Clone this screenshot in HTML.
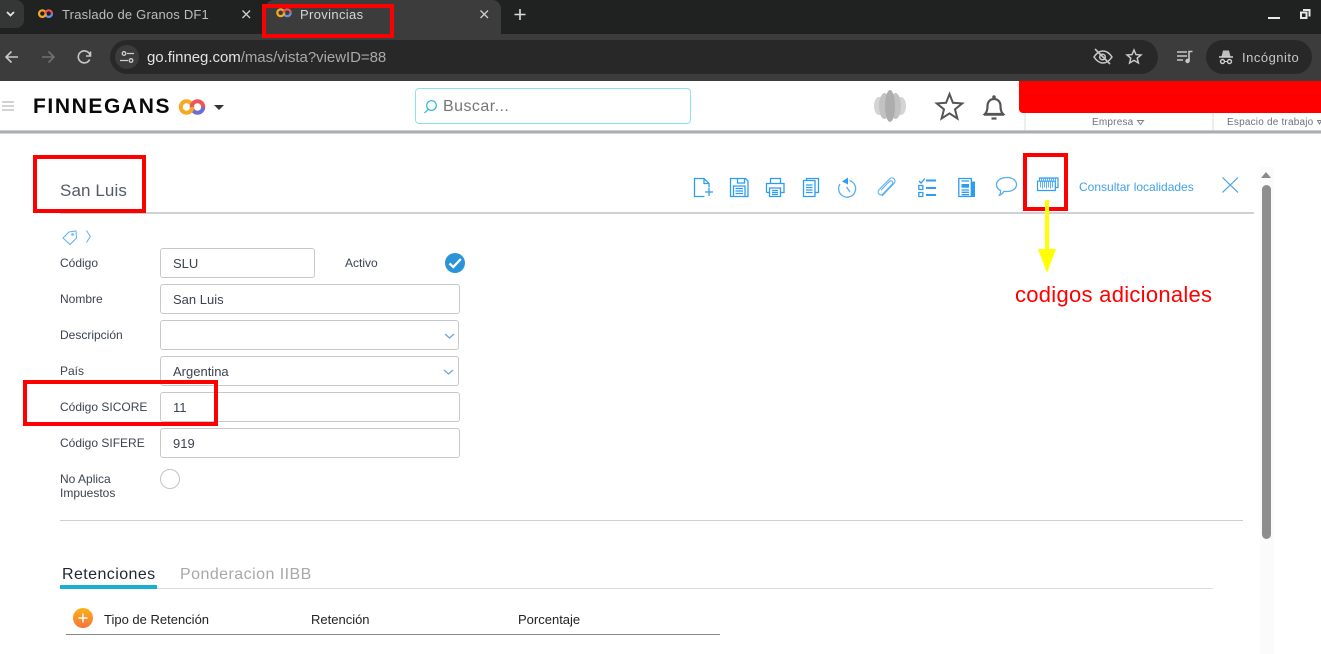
<!DOCTYPE html>
<html><head><meta charset="utf-8"><title>Provincias</title>
<style>
html,body{margin:0;padding:0;width:1321px;height:654px;overflow:hidden;background:#fff;font-family:"Liberation Sans",sans-serif}
.a{position:absolute;white-space:nowrap}
.l{position:absolute;left:60px;font-size:12px;color:#3b4351;line-height:14px}
.i{position:absolute;left:160px;box-sizing:border-box;height:30px;border:1px solid #c9c9c9;border-radius:3px;font-size:13px;color:#3b4351;padding-left:12px;line-height:30px;background:#fff}
.r{position:absolute;box-sizing:border-box;border:4px solid #f00}
svg{position:absolute;overflow:visible}
</style></head><body>
<!-- browser chrome -->
<div class="a" style="left:0;top:0;width:1321px;height:34px;background:#202221"></div>
<div class="a" style="left:0;top:34px;width:1321px;height:47px;background:#3c3c3c"></div>
<div class="a" style="left:0;top:0;width:24px;height:28px;background:#353636;border-radius:0 8px 8px 0"></div>
<svg style="left:0;top:0" width="24" height="28"><path d="M7 12l3.500 3.500L14 12" fill="none" stroke="#e3e3e3" stroke-width="1.800"/></svg>
<div class="a" style="left:265px;top:0;width:236px;height:34px;background:#3c3c3c;border-radius:9px 9px 0 0"></div>
<svg style="left:38px;top:9px" width="15" height="9.200" viewBox="0 0 26 16" fill="none" stroke-width="3.800"><path d="M12.750 8A5.750 5.750 0 0 0 24.250 8" stroke="#6d8fe0"/><circle cx="7.500" cy="8" r="5.750" stroke="#f7a823"/><path d="M12.750 8A5.750 5.750 0 0 1 24.250 8" stroke="#f0545a"/></svg>
<svg style="left:276px;top:8px" width="16" height="9.500" viewBox="0 0 26 16" fill="none" stroke-width="3.800"><path d="M12.750 8A5.750 5.750 0 0 0 24.250 8" stroke="#5d9ad8"/><circle cx="7.500" cy="8" r="5.750" stroke="#f7a823"/><path d="M12.750 8A5.750 5.750 0 0 1 24.250 8" stroke="#f0545a"/></svg>
<div class="a" style="left:62px;top:7px;font-size:13px;line-height:16px;color:#bdbdbd;letter-spacing:.2px">Traslado de Granos DF1</div>
<div class="a" style="left:300px;top:7px;font-size:13px;line-height:16px;color:#d6d6d6;letter-spacing:.35px">Provincias</div>
<svg style="left:0;top:0" width="540" height="30"><path d="M242.500 10.500l7.500 7.500M250 10.500l-7.500 7.500M480.500 10.500l7.500 7.500M488 10.500l-7.500 7.500" stroke="#d0d0d0" stroke-width="1.300"/><path d="M520 9v11M514.500 14.500h11" stroke="#dcdcdc" stroke-width="1.600"/></svg>
<svg style="left:1260px;top:0" width="60" height="30"><path d="M8 18h12" stroke="#e8e8e8" stroke-width="2"/><path d="M43 10h6.500v6.500" fill="none" stroke="#e8e8e8" stroke-width="2"/><path d="M41 12.500h5.500v5.500H41z" fill="none" stroke="#e8e8e8" stroke-width="2"/></svg>
<svg style="left:0;top:40px" width="110" height="34"><path d="M18 17H7M11.500 11.500L6 17l5.500 5.500" fill="none" stroke="#c8c8c8" stroke-width="1.600"/><path d="M42 17h11M48.500 11.500L54 17l-5.500 5.500" fill="none" stroke="#717171" stroke-width="1.600"/><path d="M90 15a6 6 0 1 0-.300 4.500M90.500 11.500v4.500h-4.500" fill="none" stroke="#c8c8c8" stroke-width="1.600"/></svg>
<div class="a" style="left:110px;top:40px;width:1048px;height:34px;background:#282828;border-radius:17px"></div>
<div class="a" style="left:115px;top:45px;width:24px;height:24px;background:#3c3c3c;border-radius:12px"></div>
<svg style="left:115px;top:45px" width="24" height="24"><circle cx="9" cy="8.500" r="1.800" fill="none" stroke="#d0d0d0" stroke-width="1.300"/><circle cx="16" cy="15.500" r="1.800" fill="none" stroke="#d0d0d0" stroke-width="1.300"/><path d="M12 8.500h7M5 15.500h8" stroke="#d0d0d0" stroke-width="1.300"/></svg>
<div class="a" style="left:147px;top:49px;font-size:15px;line-height:18px;color:#a9a9a9;letter-spacing:-.04px"><span style="color:#e3e3e3">go.finneg.com</span>/mas/vista?viewID=88</div>
<svg style="left:1090px;top:46px" width="54" height="22"><path d="M4 11c3-4.500 6-6 9-6s6 1.500 9 6c-3 4.500-6 6-9 6s-6-1.500-9-6z" fill="none" stroke="#c8c8c8" stroke-width="1.500"/><circle cx="12.500" cy="11" r="2.800" fill="none" stroke="#c8c8c8" stroke-width="1.500"/><path d="M5 3l15 15" stroke="#c8c8c8" stroke-width="1.600"/><path d="M44 4l2 4.600 5 .4-3.800 3.200 1.200 4.800-4.400-2.600-4.400 2.600 1.200-4.800L37 9l5-.4z" fill="none" stroke="#c8c8c8" stroke-width="1.500"/></svg>
<svg style="left:1175px;top:46px" width="20" height="20"><path d="M2 6h10M2 10h10M2 14h6" stroke="#c8c8c8" stroke-width="1.600"/><path d="M14 15V5.500h3.500" fill="none" stroke="#c8c8c8" stroke-width="1.600"/><circle cx="12.500" cy="15" r="2.200" fill="#c8c8c8"/></svg>
<div class="a" style="left:1206px;top:40px;width:106px;height:34px;background:#282828;border-radius:17px"></div>
<svg style="left:1218px;top:49px" width="16" height="16"><path d="M1 8h14" fill="none" stroke="#d0d0d0" stroke-width="1.500"/><path d="M3.500 7.500l1.500-6h6l1.500 6" fill="#d0d0d0" opacity=".9"/><circle cx="4.500" cy="12.500" r="2" fill="none" stroke="#d0d0d0" stroke-width="1.400"/><circle cx="11.500" cy="12.500" r="2" fill="none" stroke="#d0d0d0" stroke-width="1.400"/><path d="M6.500 12.500h3" stroke="#d0d0d0"/></svg>
<div class="a" style="left:1242px;top:50px;font-size:13px;line-height:15px;color:#c8c8c8;letter-spacing:.5px">Incógnito</div>

<!-- app header -->
<svg style="left:0;top:0" width="1321" height="135"><path d="M2 102h12M2 106h12M2 110h12" stroke="#a4a4a4" stroke-width="1"/><path d="M0 130.500h1321" stroke="#eceef0"/><path d="M0 132h1321" stroke="#a9adb5" stroke-width="3"/><path d="M1025 113v17M1213 113v17" stroke="#eceef0" stroke-width="2"/></svg>
<div class="a" style="left:33px;top:94px;font-size:21px;line-height:26px;color:#0a0a0a;font-weight:bold;letter-spacing:1.600px">FINNEGANS</div>
<svg style="left:179px;top:99px" width="26" height="16" viewBox="0 0 26 16" fill="none" stroke-width="4"><path d="M12.750 8A5.750 5.750 0 0 0 24.250 8" stroke="#6d6fd0"/><circle cx="7.500" cy="8" r="5.750" stroke="#f7a823"/><path d="M12.750 8A5.750 5.750 0 0 1 24.250 8" stroke="#f0545a"/></svg>
<svg style="left:214px;top:105px" width="10" height="5"><path d="M0 0h10L5 5z" fill="#333"/></svg>
<div class="a" style="left:415px;top:88px;width:276px;height:36px;box-sizing:border-box;border:1px solid #8ee1f4;border-radius:4px"></div>
<svg style="left:423px;top:99px" width="16" height="16"><circle cx="8.500" cy="6.500" r="4.800" fill="none" stroke="#29b5d8" stroke-width="1.200"/><path d="M5 10.500L1.500 14" stroke="#29b5d8" stroke-width="1.200"/></svg>
<div class="a" style="left:443px;top:97px;font-size:16px;line-height:19px;color:#767676;letter-spacing:.45px">Buscar...</div>
<svg style="left:874px;top:90px" width="32" height="32"><ellipse cx="5" cy="16" rx="5" ry="9" fill="#d4d4d4"/><ellipse cx="27" cy="16" rx="5" ry="9" fill="#d4d4d4"/><ellipse cx="10.500" cy="16" rx="5.500" ry="13" fill="#c2c2c2"/><ellipse cx="21.500" cy="16" rx="5.500" ry="13" fill="#c2c2c2"/><ellipse cx="16" cy="16" rx="5" ry="16" fill="#adadad"/></svg>
<svg style="left:935px;top:92px" width="29" height="28"><path d="M14.500 2l3.400 8.800 9.300.6-7.200 6 2.400 9.100-7.900-5.100-7.900 5.100 2.400-9.100-7.200-6 9.300-.6z" fill="none" stroke="#555" stroke-width="2"/></svg>
<svg style="left:983px;top:94px" width="22" height="27"><path d="M2 20c2-2 2.500-4 2.500-8 0-4 2.500-7 6.500-7s6.500 3 6.500 7c0 4 .5 6 2.500 8z" fill="none" stroke="#555" stroke-width="2.200"/><path d="M1 20.500h20" stroke="#555" stroke-width="2.400"/><circle cx="11" cy="3" r="1.800" fill="#555"/><path d="M8.500 24.500h5" stroke="#555" stroke-width="2.200"/></svg>
<div class="a" style="left:1019px;top:81px;width:302px;height:32px;background:#f00;border-radius:0 0 0 4px"></div>
<div class="a" style="left:1092px;top:117px;font-size:10px;line-height:12px;color:#6c7280;letter-spacing:.2px">Empresa</div>
<svg style="left:1137px;top:120px" width="8" height="6"><path d="M.5.500h6L3.500 4.500z" fill="none" stroke="#7a7f8a"/></svg>
<div class="a" style="left:1227px;top:117px;font-size:10px;line-height:12px;color:#6c7280;letter-spacing:.2px">Espacio de trabajo</div>
<svg style="left:1317px;top:120px" width="6" height="6"><path d="M.5.500h4L2.500 4z" fill="none" stroke="#7a7f8a"/></svg>

<!-- scrollbar -->
<div class="a" style="left:1260px;top:167px;width:14px;height:487px;background:#fbfbfb"></div>
<svg style="left:1261px;top:172px" width="10" height="7"><path d="M5 0l5 6H0z" fill="#8a8a8a"/></svg>
<div class="a" style="left:1262px;top:185px;width:9px;height:354px;background:#8e8e8e;border-radius:5px"></div>

<!-- title row -->
<div class="a" style="left:60px;top:180px;font-size:17px;line-height:21px;color:#545a66;letter-spacing:.1px">San Luis</div>
<div class="a" style="left:60px;top:212px;width:1194px;height:2px;background:#cfcfd6"></div>

<svg style="left:690px;top:170px" width="380" height="34" fill="none" stroke="#2e9df0" stroke-width="1.300">
<path d="M14.500 26.500H4.500V8.500h9.500l5 5v4M14 8.500v5h5M19 18v8M15 22h8"/>
<path d="M40.500 8.500h15l2.500 2.500v15.500H40.500zM47.500 8.500v4.500h7V8.500M43.500 26.500v-10.500h11.500v10.500M45.500 18.500h7.500M45.500 21h7.500M45.500 23.500h7.500"/>
<path d="M80.500 13.500v-5h10v5M76.500 22.500v-9h17.500v9h-3.500M79.500 22.500h-3M79.500 18h11v8.500h-11zM82 20.500h6M82 22.500h6M82 24.500h6"/>
<path d="M116.500 10.500V8.500h12v14h-3.500M113.500 10.500h11.500v16h-11.500zM116 15h6.500M116 17.500h6.500M116 20h6.500M116 22.500h6.500"/>
<path d="M159.500 10.500a8.500 8.500 0 1 1-9.500 3.500M156.500 17l3.500 5" stroke="#56aef2"/><path d="M152 11.500l6-4v7z" fill="#2e9df0" stroke="none"/>
<path d="M192 26l12-12.500c3-3.500-1.500-7.500-4.500-4.500L188.800 20c-2.200 2.800 1.200 6.400 4 4l9.500-10c1.500-2-1-4.300-2.800-2.700l-8.500 9" stroke="#5bb1f3" stroke-width="1.100"/>
<path d="M229 11l2 2 4-4.500M228.800 15.500h4v4h-4zM228.800 22.500h4v4h-4z"/><path d="M236 10.500h10M236 18h10M236 25h10" stroke-width="2.100"/>
<path d="M268.800 8.500h12.500v18h-12.500zM271.500 11h7.500M271.500 20h7.500M271.500 22.300h7.500M271.500 24.700h7.500"/><path d="M271.500 14h7.500v3.700h-7.500z" fill="#2e9df0" stroke="none"/><path d="M281.500 11.500h3.500v15.500h-3.500z" fill="#2e9df0" stroke="none"/>
<path d="M317 7.500c5.500 0 9.500 3 9.500 7s-4 7-9.500 7c-1 0-2-.1-3-.3-1 1.800-3 3.500-4.500 4 .8-1.300 1.200-3 1-4.700-2.500-1.200-4-3.500-4-6 0-4 4.500-7 10.500-7z" stroke="#56aef2"/>
<path d="M349.500 10.500V8h18.500v9.500h-2.500M347.500 11.200h17.800v9.300h-17.800z" stroke-width="1.200"/><path d="M350.500 11.500v6M352.500 11.500v7M354.500 11.500v6M356.500 11.500v7M358.500 11.500v6M360.500 11.500v7M362.500 11.500v6M351.500 8.500v2.500M353.500 8.500v2.500M355.500 8.500v2.500M357.500 8.500v2.500M359.500 8.500v2.500M361.500 8.500v2.500M363.500 8.500v2.500M365.500 8.500v2.500" stroke-width="1" stroke="#5bb1f3"/>
</svg>
<div class="a" style="left:1079px;top:180px;font-size:12px;line-height:15px;color:#41a2ea">Consultar localidades</div>
<svg style="left:1222px;top:177px" width="17" height="16"><path d="M.5.500l15.500 15M16 .5L.5 15.500" stroke="#3a9fe8" stroke-width="1.100"/></svg>

<svg style="left:62px;top:229px" width="30" height="18" fill="none" stroke="#5bb1f3" stroke-width="1"><path d="M1 9l6-6 7-1 .5 7-6.500 6.500z"/><circle cx="10.500" cy="5.500" r=".8"/><path d="M24.500 1.500l3.800 6-3.800 6"/></svg>

<!-- form -->
<div class="l" style="top:256px">Código</div>
<div class="i" style="top:248px;width:155px">SLU</div>
<div class="l" style="left:345px;top:256px">Activo</div>
<svg style="left:445px;top:253px" width="20" height="20"><circle cx="10" cy="10" r="10" fill="#2b94d8"/><path d="M4.500 10.500l3.800 3.500 7.500-8" fill="none" stroke="#fff" stroke-width="2.300"/></svg>
<div class="l" style="top:292px">Nombre</div>
<div class="i" style="top:284px;width:300px">San Luis</div>
<div class="l" style="top:328px">Descripción</div>
<div class="i" style="top:320px;width:299px"></div>
<div class="l" style="top:364px">País</div>
<div class="i" style="top:356px;width:299px">Argentina</div>
<svg style="left:444px;top:332px" width="12" height="45" fill="none" stroke="#6aa6e0" stroke-width="1.300"><path d="M1 2l4.500 4L10 2M0 38l4.500 4L9 38"/></svg>
<div class="l" style="top:400px">Código SICORE</div>
<div class="i" style="top:392px;width:300px">11</div>
<div class="l" style="top:436px">Código SIFERE</div>
<div class="i" style="top:428px;width:300px">919</div>
<div class="l" style="top:472px">No Aplica<br>Impuestos</div>
<div class="a" style="left:160px;top:469px;width:20px;height:20px;box-sizing:border-box;border:1px solid #c4c4c4;border-radius:50%"></div>
<div class="a" style="left:60px;top:520px;width:1183px;height:1px;background:#cfcfcf"></div>

<!-- tabs -->
<div class="a" style="left:62px;top:566px;font-size:16px;line-height:18px;color:#1f2735;letter-spacing:.42px">Retenciones</div>
<div class="a" style="left:180px;top:566px;font-size:16px;line-height:18px;color:#a8a8a8;letter-spacing:.45px">Ponderacion IIBB</div>
<div class="a" style="left:60px;top:588px;width:1153px;height:1px;background:#dcdcdc"></div>
<div class="a" style="left:60px;top:585px;width:97px;height:4px;background:#1ab0d5"></div>
<svg style="left:73px;top:608px" width="20" height="20"><defs><linearGradient id="g" x1="0" y1="0" x2="0" y2="1"><stop offset="0" stop-color="#fbb016"/><stop offset="1" stop-color="#f4743a"/></linearGradient></defs><circle cx="10" cy="10" r="10" fill="url(#g)"/><path d="M10 5.500v9M5.500 10h9" stroke="#fff" stroke-width="1.500"/></svg>
<div class="a" style="left:104px;top:612px;font-size:13px;line-height:15px;color:#222">Tipo de Retención</div>
<div class="a" style="left:311px;top:612px;font-size:13px;line-height:15px;color:#222">Retención</div>
<div class="a" style="left:518px;top:612px;font-size:13px;line-height:15px;color:#222">Porcentaje</div>
<div class="a" style="left:66px;top:634px;width:654px;height:1px;background:#888"></div>

<!-- annotations -->
<div class="r" style="left:262px;top:4px;width:132px;height:34px"></div>
<div class="r" style="left:33px;top:155px;width:113px;height:58px"></div>
<div class="r" style="left:23px;top:380px;width:195px;height:46px"></div>
<div class="r" style="left:1023px;top:153px;width:45px;height:58px"></div>
<svg style="left:1036px;top:198px" width="22" height="78"><path d="M9 2h4v49h7l-9 24-9-24h7z" fill="#ff0"/></svg>
<div class="a" style="left:1015px;top:282px;font-size:22px;line-height:25px;color:#f00;letter-spacing:.28px">codigos adicionales</div>
</body></html>
